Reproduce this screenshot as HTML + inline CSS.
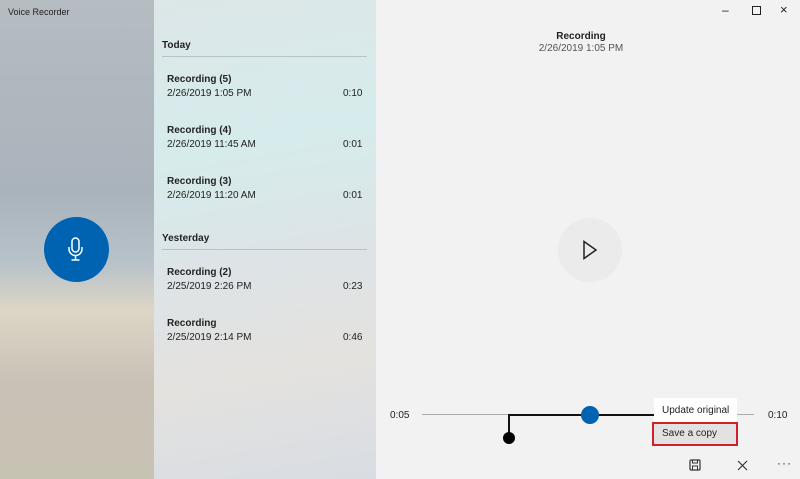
<!DOCTYPE html>
<html><head><style>
body{margin:0;width:800px;height:479px;position:relative;overflow:hidden;font-family:"Liberation Sans",sans-serif;background:#f2f2f2}
.a{position:absolute}
.left{left:0;top:0;width:154px;height:479px;background:linear-gradient(180deg,#b5bcc2 0%,#aab3bb 40%,#b8c2c9 55%,#ddd6c6 65%,#c9c0b6 80%,#c7c3b3 100%)}
.mid{left:154px;top:0;width:222px;height:479px;background:linear-gradient(170deg,#dde6e8 0%,#d6ecec 30%,#dde3e6 55%,#e4e2df 75%,#d8dde3 100%)}
.h{font-size:10px;font-weight:bold;color:#222;left:162px}
.hr{left:162px;width:205px;height:1px;background:#b9c2c6}
.t{font-size:10px;font-weight:bold;color:#222;left:167px}
.d{font-size:10px;color:#222;left:167px}
.r{font-size:10px;color:#222;left:343px}
</style></head><body>
<div class="a left"></div>
<div class="a mid"></div>
<div class="a" style="left:8px;top:7px;font-size:9px;color:#222">Voice Recorder</div>
<div class="a" style="left:44px;top:217px;width:65px;height:65px;border-radius:50%;background:#0063b1"></div>
<svg class="a" style="left:64px;top:235px" width="24" height="30" viewBox="0 0 24 30"><rect x="8" y="3" width="7" height="14" rx="3.5" fill="none" stroke="#fff" stroke-width="1.5"/><path d="M5 12v2a6.5 6.5 0 0 0 13 0v-2M11.5 20.5v4M7.5 25h8" fill="none" stroke="#fff" stroke-width="1.5"/></svg>
<div class="a h" style="top:40px">Today</div><div class="a hr" style="top:56px"></div>
<div class="a t" style="top:74px">Recording (5)</div><div class="a d" style="top:88px">2/26/2019 1:05 PM</div><div class="a r" style="top:88px">0:10</div>
<div class="a t" style="top:125px">Recording (4)</div><div class="a d" style="top:139px">2/26/2019 11:45 AM</div><div class="a r" style="top:139px">0:01</div>
<div class="a t" style="top:176px">Recording (3)</div><div class="a d" style="top:190px">2/26/2019 11:20 AM</div><div class="a r" style="top:190px">0:01</div>
<div class="a h" style="top:233px">Yesterday</div><div class="a hr" style="top:249px"></div>
<div class="a t" style="top:267px">Recording (2)</div><div class="a d" style="top:281px">2/25/2019 2:26 PM</div><div class="a r" style="top:281px">0:23</div>
<div class="a t" style="top:318px">Recording</div><div class="a d" style="top:332px">2/25/2019 2:14 PM</div><div class="a r" style="top:332px">0:46</div>
<div class="a" style="left:376px;width:410px;top:31px;text-align:center;font-size:10px;font-weight:bold;color:#222">Recording</div>
<div class="a" style="left:376px;width:410px;top:43px;text-align:center;font-size:10px;color:#555">2/26/2019 1:05 PM</div>
<div class="a" style="left:722px;top:3px;font-size:12px;color:#222">&#8211;</div>
<div class="a" style="left:752px;top:6px;width:7px;height:7px;border:1px solid #222"></div>
<div class="a" style="left:780px;top:2px;font-size:13px;color:#222">&#215;</div>
<div class="a" style="left:558px;top:218px;width:64px;height:64px;border-radius:50%;background:#ebebeb"></div>
<svg class="a" style="left:582px;top:240px" width="16" height="20"><path d="M2 1.5L14 10L2 18.5Z" fill="none" stroke="#222" stroke-width="1.5"/></svg>
<div class="a" style="left:390px;top:410px;font-size:10px;color:#222">0:05</div>
<div class="a" style="left:768px;top:410px;font-size:10px;color:#222">0:10</div>
<div class="a" style="left:422px;top:414px;width:332px;height:1px;background:#aaa"></div>
<div class="a" style="left:509px;top:414px;width:146px;height:2px;background:#111"></div>
<div class="a" style="left:508px;top:414px;width:2px;height:22px;background:#111"></div>
<div class="a" style="left:503px;top:432px;width:12px;height:12px;border-radius:50%;background:#000"></div>
<div class="a" style="left:581px;top:406px;width:18px;height:18px;border-radius:50%;background:#0063b1"></div>
<div class="a" style="left:654px;top:398px;width:83px;height:26px;background:#fff"></div>
<div class="a" style="left:662px;top:405px;font-size:10px;color:#222">Update original</div>
<div class="a" style="left:652px;top:422px;width:82px;height:20px;background:#e2e2e2;border:2px solid #d0202a"></div>
<div class="a" style="left:662px;top:428px;font-size:10px;color:#222">Save a copy</div>
<svg class="a" style="left:689px;top:459px" width="12" height="12"><rect x="1" y="1" width="10" height="10" rx="1" fill="none" stroke="#333" stroke-width="1.2"/><rect x="3.5" y="1" width="5" height="3" fill="none" stroke="#333"/><rect x="3.5" y="7" width="5" height="4" fill="none" stroke="#333"/></svg>
<svg class="a" style="left:737px;top:460px" width="11" height="11"><path d="M1 1L10 10M10 1L1 10" stroke="#333" stroke-width="1.2"/></svg>
<div class="a" style="left:777px;top:456px;font-size:12px;color:#333;letter-spacing:1px">&#183;&#183;&#183;</div>
</body></html>
